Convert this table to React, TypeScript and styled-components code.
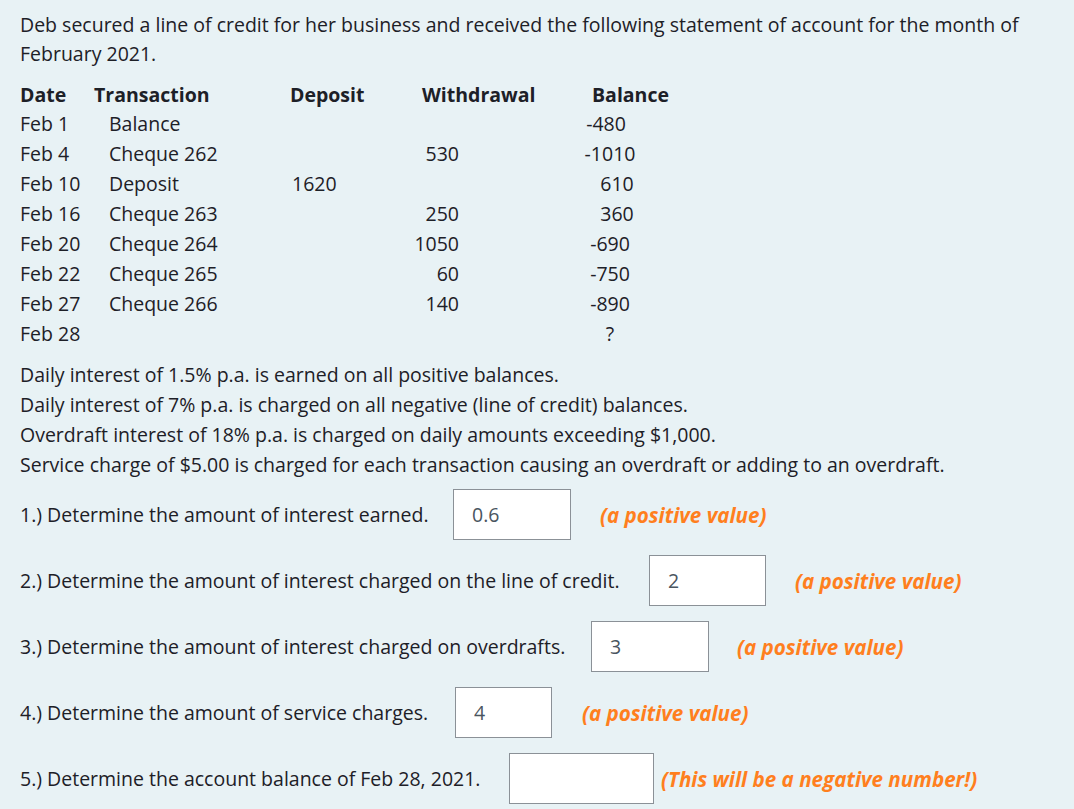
import React from "react";
import styled, { createGlobalStyle } from "styled-components";

const Global = createGlobalStyle`
  html, body { margin: 0; padding: 0; background: #e8f2f5; }
  body {
    font-family: "Open Sans", "Noto Sans", sans-serif;
    font-size: 19.5px;
    color: #1d2027;
  }
`;

const Page = styled.div`
  padding: 10px 20px 0 20px;
  min-height: 809px;
  box-sizing: border-box;
`;

const Intro = styled.p`
  margin: 0;
  line-height: 29px;
`;

const Table = styled.div`
  display: grid;
  grid-template-columns: 74px 196px 132px 170px 1fr;
  grid-template-rows: 29px;
  grid-auto-rows: 30px;
  align-items: center;
  margin-top: 12px;
  line-height: 30px;
`;

const Head = styled.div`
  font-weight: 700;
  white-space: nowrap;
`;

const Cell = styled.div<{ $indent?: number }>`
  white-space: nowrap;
  padding-left: ${(p) => p.$indent ?? 0}px;
`;

const RightCell = styled.div`
  display: flex;
  justify-content: flex-end;
  padding-right: 133px;
  white-space: nowrap;
`;

const CenterCell = styled.div<{ $dx?: number }>`
  display: flex;
  justify-content: center;
  width: 36px;
  margin-left: ${(p) => p.$dx ?? 0}px;
  white-space: nowrap;
`;

const Rules = styled.div`
  margin-top: 11px;
  margin-bottom: -6px;
  line-height: 30px;
`;

const Question = styled.div`
  display: flex;
  align-items: center;
  height: 51px;
  margin-top: 15px;
  white-space: nowrap;
`;

const Label = styled.label<{ $w: number }>`
  flex: 0 0 ${(p) => p.$w}px;
`;

const AnswerBox = styled.input<{ $w: number }>`
  box-sizing: border-box;
  flex: 0 0 ${(p) => p.$w}px;
  width: ${(p) => p.$w}px;
  height: 51px;
  border: 1px solid #8b9197;
  background: #fff;
  padding: 0 0 0 18px;
  font-family: inherit;
  font-size: 19.5px;
  color: #4a5560;
  outline: none;
`;

const Hint = styled.em<{ $gap: number }>`
  margin-left: ${(p) => p.$gap}px;
  color: #ff7f1e;
  font-size: 20.6px;
  font-weight: 700;
  font-style: italic;
`;

const rows: [string, string, string, string, string, number][] = [
  ["Feb 1", "Balance", "", "", "-480", -4],
  ["Feb 4", "Cheque 262", "", "530", "-1010", 0],
  ["Feb 10", "Deposit", "1620", "", "610", 7],
  ["Feb 16", "Cheque 263", "", "250", "360", 7],
  ["Feb 20", "Cheque 264", "", "1050", "-690", 0],
  ["Feb 22", "Cheque 265", "", "60", "-750", 0],
  ["Feb 27", "Cheque 266", "", "140", "-890", 0],
  ["Feb 28", "", "", "", "?", 0],
];

const questions = [
  { label: "1.) Determine the amount of interest earned.", lw: 433, value: "0.6", w: 118, gap: 29, hint: "(a positive value)" },
  { label: "2.) Determine the amount of interest charged on the line of credit.", lw: 629, value: "2", w: 117, gap: 29, hint: "(a positive value)" },
  { label: "3.) Determine the amount of interest charged on overdrafts.", lw: 571, value: "3", w: 118, gap: 28, hint: "(a positive value)" },
  { label: "4.) Determine the amount of service charges.", lw: 435, value: "4", w: 97, gap: 30, hint: "(a positive value)" },
  { label: "5.) Determine the account balance of Feb 28, 2021.", lw: 489, value: "", w: 145, gap: 7, hint: "(This will be a negative number!)" },
];

export default function App() {
  return (
    <Page>
      <Global />
      <Intro>
        Deb secured a line of credit for her business and received the following statement of account for the month of
        February 2021.
      </Intro>
      <Table>
        <Head>Date</Head>
        <Head>Transaction</Head>
        <Head>Deposit</Head>
        <Head>Withdrawal</Head>
        <Head>Balance</Head>
        {rows.map(([d, t, dep, w, b, dx]) => (
          <React.Fragment key={d}>
            <Cell>{d}</Cell>
            <Cell $indent={15}>{t}</Cell>
            <Cell $indent={2}>{dep}</Cell>
            <RightCell>{w}</RightCell>
            <CenterCell $dx={dx}>{b}</CenterCell>
          </React.Fragment>
        ))}
      </Table>
      <Rules>
        <div>Daily interest of 1.5% p.a. is earned on all positive balances.</div>
        <div>Daily interest of 7% p.a. is charged on all negative (line of credit) balances.</div>
        <div>Overdraft interest of 18% p.a. is charged on daily amounts exceeding $1,000.</div>
        <div>Service charge of $5.00 is charged for each transaction causing an overdraft or adding to an overdraft.</div>
      </Rules>
      {questions.map((q) => (
        <Question key={q.label}>
          <Label $w={q.lw}>{q.label}</Label>
          <AnswerBox $w={q.w} defaultValue={q.value} />
          <Hint $gap={q.gap}>{q.hint}</Hint>
        </Question>
      ))}
    </Page>
  );
}
